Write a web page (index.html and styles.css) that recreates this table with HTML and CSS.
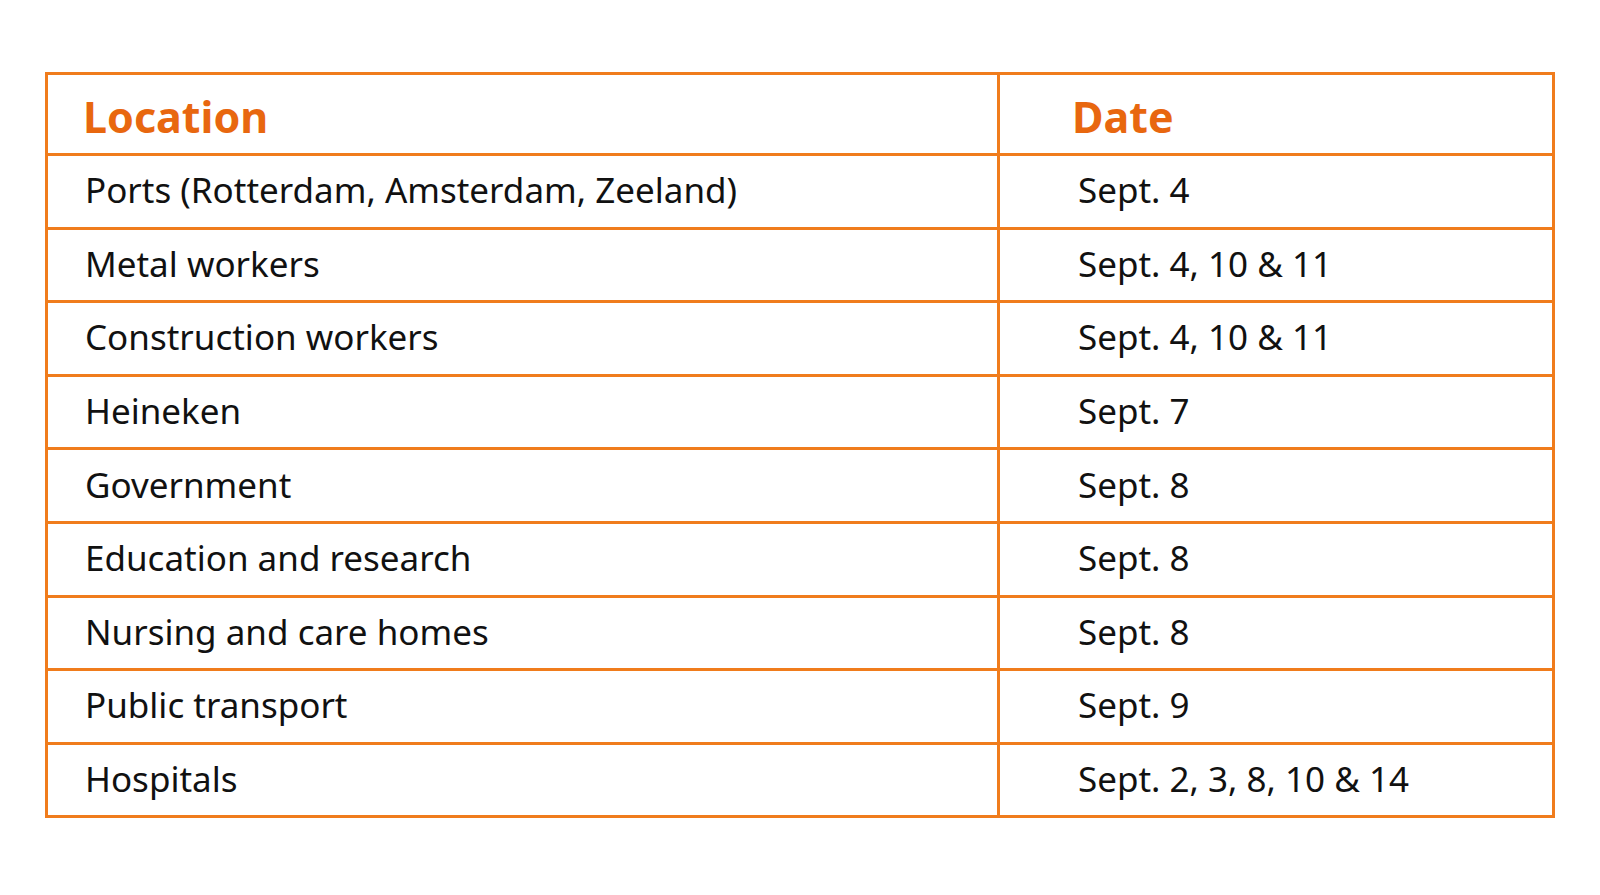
FILE: index.html
```html
<!DOCTYPE html>
<html lang="en">
<head>
<meta charset="utf-8">
<title>Strike dates</title>
<link rel="stylesheet" href="styles.css">
</head>
<body>
<main class="page">
  <table class="dates">
    <colgroup>
      <col class="col-loc">
      <col class="col-date">
    </colgroup>
    <thead>
      <tr><th class="loc">Location</th><th class="date">Date</th></tr>
    </thead>
    <tbody>
      <tr><td class="loc">Ports (Rotterdam, Amsterdam, Zeeland)</td><td class="date">Sept. 4</td></tr>
      <tr><td class="loc">Metal workers</td><td class="date">Sept. 4, 10 &amp; 11</td></tr>
      <tr><td class="loc">Construction workers</td><td class="date">Sept. 4, 10 &amp; 11</td></tr>
      <tr><td class="loc">Heineken</td><td class="date">Sept. 7</td></tr>
      <tr><td class="loc">Government</td><td class="date">Sept. 8</td></tr>
      <tr><td class="loc">Education and research</td><td class="date">Sept. 8</td></tr>
      <tr><td class="loc">Nursing and care homes</td><td class="date">Sept. 8</td></tr>
      <tr><td class="loc">Public transport</td><td class="date">Sept. 9</td></tr>
      <tr><td class="loc">Hospitals</td><td class="date">Sept. 2, 3, 8, 10 &amp; 14</td></tr>
    </tbody>
  </table>
</main>
</body>
</html>
```

FILE: styles.css
```css
html, body {
  margin: 0;
  padding: 0;
  background: #ffffff;
}

.page {
  padding: 72px 0 0 45px;
  font-family: "Noto Sans", "Open Sans", "DejaVu Sans", sans-serif;
}

.dates {
  width: 1507px;
  border-collapse: collapse;
  border: 3px solid #f07c1c;
  table-layout: fixed;
}

.col-loc { width: 952px; }
.col-date { width: 555px; }

.dates th,
.dates td {
  border: 3px solid #f07c1c;
  text-align: left;
  padding: 0;
  vertical-align: middle;
}

.dates th {
  height: 81px;
  padding-top: 5px;
  box-sizing: border-box;
  font-size: 43px;
  font-weight: 700;
  color: #e8670f;
}

.dates td {
  height: 67.6px;
  padding-bottom: 3px;
  font-size: 35px;
  font-weight: 400;
  color: #111111;
}

.dates th.loc { padding-left: 35px; }
.dates th.date { padding-left: 72px; }
.dates td.loc { padding-left: 37px; }
.dates td.date { padding-left: 78px; }
```
